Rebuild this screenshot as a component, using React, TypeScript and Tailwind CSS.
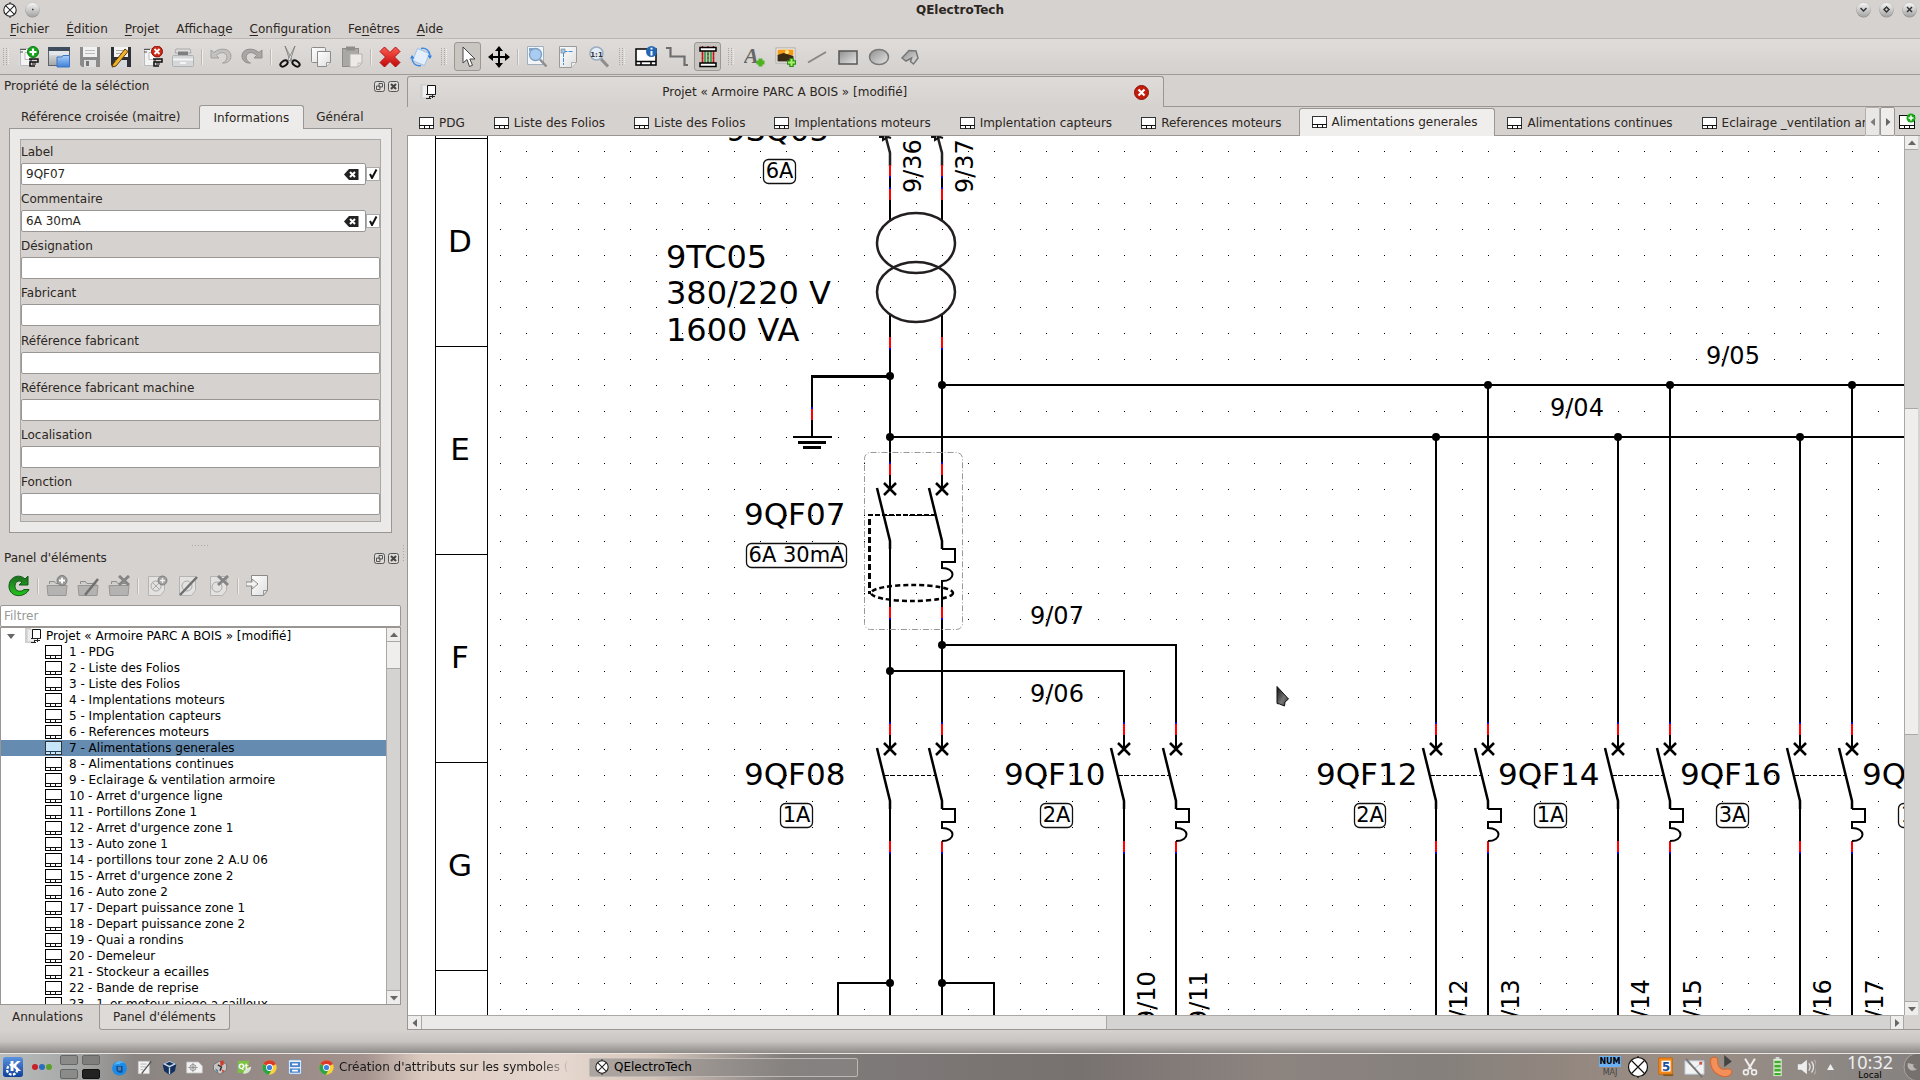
import { useState, type ReactNode } from "react";

const FOLIOS = [
  "PDG",
  "Liste des Folios",
  "Liste des Folios",
  "Implentations moteurs",
  "Implentation capteurs",
  "References moteurs",
  "Alimentations generales",
  "Alimentations continues",
  "Eclairage & ventilation armoire",
  "Arret d'urgence ligne",
  "Portillons Zone 1",
  "Arret d'urgence zone 1",
  "Auto zone 1",
  "portillons tour zone 2 A.U 06",
  "Arret d'urgence zone 2",
  "Auto zone 2",
  "Depart puissance zone 1",
  "Depart puissance zone 2",
  "Quai a rondins",
  "Demeleur",
  "Stockeur a ecailles",
  "Bande de reprise",
  "1_er moteur piege a cailloux",
];

const MENUS = [
  ["", "F", "ichier"],
  ["", "É", "dition"],
  ["", "P", "rojet"],
  ["Afficha", "g", "e"],
  ["", "C", "onfiguration"],
  ["Fe", "n", "êtres"],
  ["", "A", "ide"],
];

const FIELDS = [
  { id: "label", nom: "Label", valeur: "9QF07", coche: true },
  { id: "commentaire", nom: "Commentaire", valeur: "6A 30mA", coche: true },
  { id: "designation", nom: "Désignation", valeur: "", coche: false },
  { id: "fabricant", nom: "Fabricant", valeur: "", coche: false },
  { id: "ref-fabricant", nom: "Référence fabricant", valeur: "", coche: false },
  { id: "ref-machine", nom: "Référence fabricant machine", valeur: "", coche: false },
  { id: "localisation", nom: "Localisation", valeur: "", coche: false },
  { id: "fonction", nom: "Fonction", valeur: "", coche: false },
];

/* ---------- Icons ---------- */

function Svg({ children, size = 22 }: { children: ReactNode; size?: number }) {
  return (
    <svg width={size} height={size} viewBox="0 0 22 22" className="shrink-0" aria-hidden="true">
      {children}
    </svg>
  );
}

function Gradients() {
  return (
    <svg width="0" height="0" className="absolute" aria-hidden="true">
      <defs>
        <linearGradient id="gris" x1="0" y1="0" x2="0" y2="1"><stop offset="0" stopColor="#f7f7f7" /><stop offset="1" stopColor="#a5a5a5" /></linearGradient>
        <linearGradient id="forme" x1="0" y1="0" x2="1" y2="1"><stop offset="0" stopColor="#8f8f8f" /><stop offset="1" stopColor="#e6e6e6" /></linearGradient>
        <linearGradient id="bleu" x1="0" y1="0" x2="0" y2="1"><stop offset="0" stopColor="#a9d0fb" /><stop offset="1" stopColor="#3f7fd6" /></linearGradient>
        <linearGradient id="kde" x1="0" y1="0" x2="0" y2="1"><stop offset="0" stopColor="#5a93e0" /><stop offset="1" stopColor="#0d3f9c" /></linearGradient>
        <linearGradient id="rouge" x1="0" y1="0" x2="0" y2="1"><stop offset="0" stopColor="#ff5b50" /><stop offset="1" stopColor="#c00808" /></linearGradient>
        <linearGradient id="papier" x1="0" y1="0" x2="1" y2="1"><stop offset="0" stopColor="#ffffff" /><stop offset="1" stopColor="#dedede" /></linearGradient>
        <linearGradient id="vert" x1="0" y1="0" x2="0" y2="1"><stop offset="0" stopColor="#1f6b22" /><stop offset="1" stopColor="#22c41c" /></linearGradient>
        <linearGradient id="fleche" x1="0" y1="0" x2="1" y2="1"><stop offset="0" stopColor="#111" /><stop offset="0.6" stopColor="#777" /><stop offset="1" stopColor="#222" /></linearGradient>
      </defs>
    </svg>
  );
}

function FolioIcon({ large, actif }: { large?: boolean; actif?: boolean }) {
  const w = large ? 17 : 15;
  const h = large ? 14 : 12;
  return (
    <svg width={w} height={h} className="shrink-0" aria-hidden="true">
      <rect x="0.5" y="0.5" width={w - 1} height={h - 1} fill={actif ? "#c8e6f9" : "#fff"} stroke={large && !actif ? "#000" : "#333"} />
      <path d={`M0 ${h - 3.5}H${w} M5.5 ${h - 3}v3 M10.5 ${h - 3}v3`} stroke={actif ? "#244056" : "#111"} fill="none" />
    </svg>
  );
}

function ProjectIcon() {
  return (
    <svg width="16" height="16" className="shrink-0" aria-hidden="true">
      <path d="M0 0h6v15H0z" fill="#cfcfcf" />
      <path d="M2.5 1.5h7v12h-7z" fill="#eee" stroke="#d8d8d8" />
      <path d="M7.5 1.5h8v9h-8z" fill="#fff" stroke="#111" />
      <path d="M6 10.5h9M9 12.5h6M6 14.5h5M12.5 11v3M9.5 12v3" stroke="#222" fill="none" />
    </svg>
  );
}

function LampIcon({ size = 16 }: { size?: number }) {
  return (
    <Svg size={size}>
      <circle cx="11" cy="11" r="8.5" fill="#fff" stroke="#222" strokeWidth="1.5" />
      <path d="M5 5l12 12M17 5L5 17M11 0v2.5M11 19.5V22" stroke="#222" strokeWidth="1.4" />
    </Svg>
  );
}

function Pages() {
  return (
    <>
      <path d="M1 2h8v18H1z" fill="#d9d9d9" />
      <path d="M3.5 2.5h9v17h-9z" fill="#f4f4f4" stroke="#bbb" />
      <path d="M3 3.500h6M3 6h3" stroke="#555" />
      <path d="M8 6.500h10v7H8z" fill="#fff" stroke="#bbb" />
      <path d="M12 13h9v3h-8v4h5" fill="none" stroke="#111" strokeWidth="1.5" />
      <path d="M14 13v3M18 16v3M16 16v3" stroke="#111" />
    </>
  );
}

function Folder() {
  return (
    <>
      <path d="M3.5 9V6.500h5l1.500 2h9V10" fill="#cfcdcb" stroke="#8e8e8e" />
      <path d="M1 10.500h20l-1 10H2z" fill="#b4b3b1" stroke="#979695" />
    </>
  );
}

const TOOL_ICONS: Record<string, ReactNode> = {
  nouveau: (<><Pages /><circle cx="16" cy="6" r="5.5" fill="#15a51c" stroke="#0b7a12" /><path d="M16 2.500v7M12.500 6h7" stroke="#fff" strokeWidth="2.2" /></>),
  ouvrir: (<><rect x="0.5" y="1.5" width="21" height="18" fill="url(#gris)" stroke="#59646f" /><path d="M0 1h22v4H0z" fill="#3f4d5e" /><path d="M2 6h18v3H2z" fill="#dfe6ee" /><path d="M9 11h5l1-1.500h6.500V21H9z" fill="url(#bleu)" stroke="#3c74c4" /></>),
  enregistrer: (<><path d="M1 1h20v20H3l-2-2z" fill="#8b8b8b" /><rect x="4" y="1" width="14" height="10" fill="#f1f1f1" /><path d="M6 4.500h10M6 7.500h10" stroke="#bbb" /><rect x="5" y="14" width="12" height="7" fill="#dedede" /><rect x="7" y="15" width="3" height="5" fill="#777" /></>),
  sous: (<><path d="M1 1h20v20H3l-2-2z" fill="#2d3136" /><rect x="4" y="1" width="14" height="10" fill="#f4f4f4" /><path d="M6 4.500h10M6 7.500h10" stroke="#aaa" /><rect x="5" y="14" width="12" height="7" fill="#d5d8dc" /><path d="M3 18L15 3l3 2.500L6 20l-4 1z" fill="#f2b22a" stroke="#5b3c06" /></>),
  fermer: (<><Pages /><circle cx="16" cy="5.5" r="5.5" fill="#cc2a18" stroke="#8f1208" /><path d="M13.500 3l5 5M18.500 3l-5 5" stroke="#fff" strokeWidth="1.8" /></>),
  imprimer: (<><path d="M4 3h14l1 4H3z" fill="#ddd" stroke="#aaa" /><path d="M6 5.500h10v4H6z" fill="#7e7e7e" /><rect x="0.5" y="9.5" width="21" height="11" rx="1" fill="#d4d6d8" stroke="#aeb2b5" /><path d="M1 13.500h20M8 17h6" stroke="#f4f4f4" strokeWidth="2" /></>),
  annuler: <path d="M1 4v8h8L6.500 9.500C10 5 16.500 6 17 11c0 3-2 5-4.500 6 5 .5 8.500-2.500 8.500-7C21 3 11 .5 4 6.500z" fill="#c4c2c0" stroke="#a3a19f" />,
  retablir: <path d="M21 4v8h-8l2.500-2.500C12 5 5.500 6 5 11c0 3 2 5 4.500 6C4.500 17.500 1 14.500 1 10 1 3 11 .5 18 6.500z" fill="#a9a7a5" stroke="#918f8d" />,
  couper: (<><path d="M6 0l7 14-2 1z" fill="#ddd" stroke="#777" strokeWidth="0.8" /><path d="M16 0L9 14l2 1z" fill="#f4f4f4" stroke="#777" strokeWidth="0.8" /><ellipse cx="5" cy="17.5" rx="4" ry="2.5" transform="rotate(-35 5 17.5)" fill="none" stroke="#111" strokeWidth="2" /><ellipse cx="17" cy="17.5" rx="4" ry="2.5" transform="rotate(35 17 17.5)" fill="none" stroke="#111" strokeWidth="2" /></>),
  copier: (<><rect x="1.5" y="1.5" width="14" height="15" rx="1" fill="url(#papier)" stroke="#8b8b8b" /><path d="M7.500 5.500h13v11l-4 4h-9z" fill="url(#papier)" stroke="#8b8b8b" /><path d="M16.500 20.500v-4h4" fill="#eee" stroke="#999" /></>),
  coller: (<><rect x="1.5" y="2.5" width="16" height="18" fill="#aaa8a5" stroke="#8e8c8a" /><rect x="5" y="0.5" width="9" height="4" fill="#8f8d8b" /><path d="M9 8h12v9l-4 4H9z" fill="#ece9e7" stroke="#b5b3b0" /><path d="M17 21v-4h4" fill="none" stroke="#bbb" /></>),
  supprimer: <path d="M5.500 1L11 6.500 16.500 1 21 5.500 15.500 11l5.500 5.500-4.500 4.500L11 15.500 5.500 21 1 16.500 6.500 11 1 5.500z" fill="url(#rouge)" stroke="#b01212" />,
  pivoter: (<><path d="M7.500 2.500l12 5-5 12-12-5z" fill="#e4effb" stroke="#9cc0ea" /><path d="M11 2.500c5-1 8.500 2 9 7M11 19.500c-5 1-8.500-2-9-7" fill="none" stroke="#3d8be6" strokeWidth="1.5" /><path d="M17.500 9.500H22l-2 3.500zM0 12.500h4.500L2 9z" fill="#2f80e0" /></>),
  selection: <path d="M6 1v16l4-3.500 2.500 7 3-1.200-2.700-6.300H18z" fill="#fff" stroke="#444" />,
  deplacer: <path d="M11 0l4 5h-3v5h5V7l5 4-5 4v-3h-5v5h3l-4 5-4-5h3v-5H5v3l-5-4 5-4v3h5V5H7z" fill="#000" />,
  ajuster: (<><path d="M1.500.5h16v18h-16z" fill="#f2f6fa" stroke="#9fb0c2" /><path d="M3 2h4v3H3z" fill="#7fa6cf" /><circle cx="9.5" cy="8.5" r="6" fill="#a9cdf2" stroke="#7f9dbd" strokeWidth="1.3" /><path d="M14 13.500l6.500 7" stroke="#8d8d8d" strokeWidth="2.5" /></>),
  page: (<><path d="M2.500.5h17v16l-5 5h-12z" fill="url(#papier)" stroke="#9a9a9a" /><path d="M14.500 21.500v-5h5" fill="#eee" stroke="#aaa" /><path d="M6.500 5.500h10M6.500 7v12" stroke="#3c8fdc" strokeDasharray="4 1" /><rect x="4" y="3" width="4" height="4" fill="#a9c5dd" stroke="#789" strokeWidth="0.7" /></>),
  unUn: (<><path d="M13 13l7 7.500" stroke="#8d8d8d" strokeWidth="3" /><circle cx="8.5" cy="7.5" r="6.5" fill="#e3edf8" stroke="#9badc1" strokeWidth="1.5" /><text x="8.5" y="10.5" textAnchor="middle" className="text-[7px] font-bold" fill="#333">1:1</text></>),
  infos: (<><rect x="1" y="3" width="20" height="16" fill="#fff" stroke="#000" strokeWidth="1.5" /><path d="M1 15.500h20M6 16v3M16 16v3" stroke="#000" strokeWidth="1.5" /><circle cx="16.5" cy="5.5" r="5.5" fill="#2467b3" /><path d="M16.500 1.800v1.800M16.500 5v4.500" stroke="#fff" strokeWidth="2" /></>),
  conducteur: <path d="M0 2h4.500v8.500h14V19H22" fill="none" stroke="#6e6e6e" strokeWidth="2.2" />,
  echelle: (<><path d="M5.500-1v24M16.500-1v24M11-1v24" stroke="#e00000" strokeDasharray="2 2" strokeWidth="1.3" /><path d="M5.500 5v12M16.500 5v12" stroke="#d01010" strokeWidth="1.5" /><path d="M8 5v12M11 5v12M14 5v12" stroke="#168c2c" strokeWidth="1.3" /><path d="M3 1.500h16v3.500H3zM3 17h16v3.500H3z" fill="#fff" stroke="#000" strokeWidth="1.5" /></>),
  texte: (<><text x="0" y="17" className="font-['Liberation_Serif'] text-[22px] font-bold italic" fill="#666">A</text><path d="M16.500 12.500v8M12.500 16.500h8" stroke="#4db31f" strokeWidth="4" /></>),
  image: (<><rect x="1" y="2" width="19" height="15" fill="#fff" stroke="#aaa" /><path d="M2.500 3.500h16v6h-16z" fill="#f29a1c" /><path d="M2.500 9l6-2 10 3v5.500h-16z" fill="#3b2a14" /><circle cx="12" cy="6" r="2" fill="#ffe889" /><path d="M16.500 12v9M12 16.500h9" stroke="#2c8c10" strokeWidth="4.5" /><path d="M16.500 13v7M13 16.500h7" stroke="#a4f26a" strokeWidth="2" /></>),
  ligne: <path d="M2 16.500L20 6" stroke="#888" strokeWidth="2" />,
  rectangle: <rect x="2" y="5" width="18" height="13" fill="url(#forme)" stroke="#555" strokeWidth="1.5" />,
  ellipse: <ellipse cx="11" cy="11" rx="9.5" ry="7.5" fill="url(#forme)" stroke="#777" strokeWidth="1.5" />,
  polygone: <path d="M3 12L10 4.500 17 5l2 7-4.500 6-3-2.500 1-3.500L7 15z" fill="url(#forme)" stroke="#777" strokeWidth="1.5" />,
  recharger: <path d="M20 1v9h-9l3-3C10 4.500 7 7 7 11.500c0 5 6 6 9 3h5C17 23 2 23 1 12 .5 2 11-2 17 4z" fill="url(#vert)" stroke="#0e5c13" />,
  dossierPlus: (<><Folder /><circle cx="16" cy="5.5" r="5" fill="#9a9a9a" stroke="#7d7d7d" /><path d="M16 2.500v6M13 5.500h6" stroke="#fff" strokeWidth="1.8" /></>),
  dossierEdit: (<><Folder /><path d="M8 20L21 4" stroke="#707070" strokeWidth="2.5" /></>),
  dossierX: (<><Folder /><path d="M11 1l10 9M21 1l-10 9" stroke="#858585" strokeWidth="3" /></>),
  elementPlus: (<><path d="M2.500 1.500h16v14l-4 5h-12z" fill="#e3e2e1" stroke="#b5b4b3" /><circle cx="10" cy="11" r="5" fill="none" stroke="#aaa" /><path d="M6.500 7.500l7 7M13.500 7.500l-7 7" stroke="#aaa" /><circle cx="16.5" cy="5.5" r="4.5" fill="#a0a0a0" stroke="#808080" /><path d="M16.500 3v5M14 5.500h5" stroke="#eee" strokeWidth="1.5" /></>),
  elementEdit: (<><path d="M2.500 1.500h16v14l-4 5h-12z" fill="#e3e2e1" stroke="#b5b4b3" /><circle cx="10" cy="11" r="5" fill="none" stroke="#aaa" /><path d="M3 20L20 2" stroke="#707070" strokeWidth="2.5" /></>),
  elementX: (<><path d="M2.500 1.500h16v14l-4 5h-12z" fill="#e3e2e1" stroke="#b5b4b3" /><circle cx="9" cy="12" r="5" fill="none" stroke="#aaa" /><path d="M10 1l10 9M20 1l-10 9" stroke="#858585" strokeWidth="3" /></>),
  importer: (<><path d="M5.500.5h16v15l-4 5h-12z" fill="url(#papier)" stroke="#8a8a8a" /><path d="M17.500 20.500v-5h4" fill="none" stroke="#999" /><path d="M0 7h6V4l6 5-6 5v-3H0z" fill="#f2f2f2" stroke="#8a8a8a" /></>),
};

function ToolButton({ nom, icone, actif }: { nom: string; icone: string; actif?: boolean }) {
  return (
    <button
      type="button"
      aria-label={nom}
      className={`flex h-[29px] w-[31px] shrink-0 items-center justify-center ${actif ? "px-[2px]" : ""}`}
    >
      <span className={`flex h-[29px] w-7 items-center justify-center rounded-[3px] border ${actif ? "border-[#9b9793] bg-[#c9c6c2]" : "border-transparent"}`}>
        <Svg>{TOOL_ICONS[icone]}</Svg>
      </span>
    </button>
  );
}

function Separator() {
  return <div className="mx-[3px] h-4 w-px shrink-0 bg-[#bcb8b4] shadow-[1px_0_0_#efedec]" />;
}

function Handle({ first }: { first?: boolean }) {
  return (
    <div className={`flex shrink-0 items-center justify-center ${first ? "w-3" : "w-4"}`}>
      <svg width="6" height="17" aria-hidden="true">
        <path d="M0.500 0v17M3.500 0v17" stroke="#aaa6a2" strokeDasharray="1 1" />
        <path d="M5.500 1v16" stroke="#f2f0ef" strokeDasharray="1 1" />
      </svg>
    </div>
  );
}

function DockTitle({ titre }: { titre: string }) {
  return (
    <div className="flex h-5 items-center justify-between pr-[2px] pl-1">
      <h2>{titre}</h2>
      <div className="flex gap-[3px]">
        <button type="button" aria-label="Détacher">
          <svg width="11" height="11" aria-hidden="true"><rect x="0.5" y="0.5" width="10" height="10" rx="2" fill="#dedbd8" stroke="#555" /><path d="M5 2.500h3.500V6H5zM2.500 5H6v3.500H2.500z" fill="none" stroke="#555" /></svg>
        </button>
        <button type="button" aria-label="Fermer">
          <svg width="11" height="11" aria-hidden="true"><rect x="0.5" y="0.5" width="10" height="10" rx="2" fill="#dedbd8" stroke="#555" /><path d="M3 3l5 5M8 3L3 8" stroke="#444" strokeWidth="2" /></svg>
        </button>
      </div>
    </div>
  );
}

function Arrow({ d }: { d: string }) {
  return (
    <svg width="8" height="8" aria-hidden="true"><path d={d} fill="#666" /></svg>
  );
}

const UP = "M0 6L4 1.500 8 6z";
const DOWN = "M0 2L4 6.500 8 2z";
const LEFT = "M6 0L1.500 4 6 8z";
const RIGHT = "M2 0L6.500 4 2 8z";

/* ---------- Panels on the left ---------- */

function PropertiesDock() {
  return (
    <section className="flex flex-col">
      <DockTitle titre="Propriété de la séléction" />
      <div role="tablist" className="mt-2 ml-[9px] flex h-6 items-end">
        <button role="tab" type="button" aria-selected="false" className="h-[22px] pr-[18px] pl-3">Référence croisée (maitre)</button>
        <button role="tab" type="button" aria-selected="true" className="relative z-10 -mb-px h-6 rounded-t-[3px] border border-b-0 border-[#999693] bg-[#edecea] px-[14px]">Informations</button>
        <button role="tab" type="button" aria-selected="false" className="h-[22px] px-3">Général</button>
      </div>
      <div className="mx-[9px] border border-[#999693] bg-[#ebeae8] p-[10px]">
        <div className="flex h-[383px] flex-col justify-between border border-[#aaa7a5] bg-[#d6d2cf] pt-[3px] pb-[6px]">
          {FIELDS.map((f) => (
            <div key={f.id}>
              <label htmlFor={f.id} className="block h-5 leading-[18px]">{f.nom}</label>
              <div className="flex items-center">
                <div className="flex h-[22px] min-w-0 flex-1 items-center rounded-[2px] border border-[#999693] bg-white pr-[6px] pl-1">
                  <input id={f.id} defaultValue={f.valeur} className="min-w-0 flex-1 bg-transparent outline-none" />
                  {f.coche && (
                    <button type="button" aria-label="Effacer">
                      <svg width="15" height="11" aria-hidden="true"><path d="M5 0h9.500v11H5L0 5.500z" fill="#222" /><path d="M6 3l5 5M11 3L6 8" stroke="#fff" strokeWidth="2" /></svg>
                    </button>
                  )}
                </div>
                {f.coche && (
                  <label className="relative flex size-[14px] items-center justify-center border border-[#aaa] bg-white">
                    <input type="checkbox" defaultChecked aria-label={`Afficher ${f.nom}`} className="peer size-3 appearance-none" />
                    <svg width="9" height="10" className="pointer-events-none absolute hidden peer-checked:block" aria-hidden="true"><path d="M1 5l2 4L7.500 0.500" fill="none" stroke="#111" strokeWidth="2" /></svg>
                  </label>
                )}
              </div>
            </div>
          ))}
        </div>
      </div>
    </section>
  );
}

function ElementsDock({ courant, choisir }: { courant: number; choisir: (n: number) => void }) {
  return (
    <section className="flex min-h-0 flex-1 flex-col">
      <DockTitle titre="Panel d'éléments" />
      <div className="flex h-9 items-center pl-[3px]">
        <ToolButton nom="Recharger" icone="recharger" />
        <Separator />
        <ToolButton nom="Nouvelle catégorie" icone="dossierPlus" />
        <ToolButton nom="Éditer la catégorie" icone="dossierEdit" />
        <ToolButton nom="Supprimer la catégorie" icone="dossierX" />
        <Separator />
        <ToolButton nom="Nouvel élément" icone="elementPlus" />
        <ToolButton nom="Éditer l'élément" icone="elementEdit" />
        <ToolButton nom="Supprimer l'élément" icone="elementX" />
        <Separator />
        <ToolButton nom="Importer un élément" icone="importer" />
      </div>
      <input aria-label="Filtrer" placeholder="Filtrer" className="mt-px h-[22px] shrink-0 rounded-[2px] border border-[#999693] bg-white px-[3px] outline-none placeholder:text-[#999]" />
      <div className="flex min-h-0 flex-1 border border-[#999693] bg-white text-black">
        <ul role="tree" className="min-w-0 flex-1 overflow-hidden">
          <li className="flex h-4 items-center pl-[6px] leading-4">
            <Arrow d="M0 2h8L4 7z" />
            <span className="flex pr-[5px] pl-[10px]"><ProjectIcon /></span>
            Projet « Armoire PARC A BOIS » [modifié]
          </li>
          {FOLIOS.map((nom, i) => (
            <li key={i} className={i === courant ? "bg-[#658bb1]" : ""}>
              <button type="button" onClick={() => choisir(i)} className="flex h-4 w-full items-center gap-[7px] pl-11 leading-4 whitespace-nowrap">
                <FolioIcon large actif={i === courant} />
                {i + 1} - {nom}
              </button>
            </li>
          ))}
        </ul>
        <div className="flex w-[14px] flex-col border-l border-[#aaa7a5] bg-[#d5d3d1]">
          <button type="button" aria-label="Monter" className="flex h-[14px] items-center justify-center border-b border-[#aaa7a5] bg-[#eeedec]"><Arrow d={UP} /></button>
          <div className="h-[27px] border-b border-[#aaa7a5] bg-[#efeeed]" />
          <div className="flex-1" />
          <button type="button" aria-label="Descendre" className="flex h-[14px] items-center justify-center border-t border-[#aaa7a5] bg-[#eeedec]"><Arrow d={DOWN} /></button>
        </div>
      </div>
      <div role="tablist" className="flex h-[25px] shrink-0">
        <button role="tab" type="button" aria-selected="false" className="h-[23px] pr-[16px] pl-3">Annulations</button>
        <button role="tab" type="button" aria-selected="true" className="rounded-b-[3px] border border-t-0 border-[#999693] bg-[#dddad7] px-[13px]">Panel d'éléments</button>
      </div>
    </section>
  );
}

/* ---------- Schematic ---------- */

function Node({ x, y }: { x: number; y: number }) {
  return <circle cx={x} cy={y} r="4" />;
}

// Terminal of an element: red leg with a blue tip on the conductor side
function Terminal({ x, y, haut }: { x: number; y: number; haut?: boolean }) {
  return (
    <g fill="none" strokeWidth="2">
      <path d={`M${x} ${y}v11`} stroke="#ff0000" />
      <path d={haut ? `M${x} ${y - 2}v2` : `M${x} ${y + 11}v2`} stroke="#0000ff" />
    </g>
  );
}

function Breaker({ x, y, tore }: { x: number; y: number; tore?: boolean }) {
  const bas = tore ? y + 118 : y + 92;
  return (
    <g fill="none" stroke="#000" strokeWidth="2">
      {[x, x + 52].map((p) => (
        <g key={p}>
          <path d={`M${p} ${y - 14}V${y}`} />
          <path d={`M${p - 6} ${y - 6}l12 12M${p + 6} ${y - 6}l-12 12`} strokeWidth="2.5" />
          <path d={`M${p - 13} ${y - 1}L${p} ${y + 52}v8`} strokeWidth="2.5" />
          <Terminal x={p} y={y - 25} haut />
          <Terminal x={p} y={bas} />
        </g>
      ))}
      <path d={`M${x} ${y + 52}V${bas}`} />
      <path d={`M${x + 52} ${y + 60}h13v13h-13v6c14 0 14 13 0 13V${bas}`} />
      <path d={`M${x - 5} ${y + 26.5}h50`} strokeWidth="1" strokeDasharray="4 2" />
      {tore && (
        <>
          <path d={`M${x - 22} ${y + 26}h67`} strokeDasharray="5 2" />
          <path d={`M${x - 20.5} ${y + 30}v75`} strokeWidth="3" strokeDasharray="6 3" />
          <ellipse cx={x + 22} cy={y + 104} rx="41" ry="8" strokeWidth="2.5" strokeDasharray="5 3" />
        </>
      )}
    </g>
  );
}

function Rating({ x, y, w, texte }: { x: number; y: number; w: number; texte: string }) {
  return (
    <g>
      <rect x={x} y={y} width={w} height="24" rx="5" fill="none" stroke="#111" strokeWidth="1.3" />
      <text x={x + w / 2} y={y + 18} textAnchor="middle" className="text-[21px]">{texte}</text>
    </g>
  );
}

const BREAKERS = [
  { nom: "9QF07", x: 890, y: 489, tx: 744 },
  { nom: "9QF08", x: 890, y: 749, tx: 744 },
  { nom: "9QF10", x: 1124, y: 749, tx: 1004 },
  { nom: "9QF12", x: 1436, y: 749, tx: 1316 },
  { nom: "9QF14", x: 1618, y: 749, tx: 1498 },
  { nom: "9QF16", x: 1800, y: 749, tx: 1680 },
];

const RATINGS = [
  { x: 763.5, y: 159.5, w: 32, texte: "6A" },
  { x: 746.5, y: 543.5, w: 100, texte: "6A 30mA" },
  { x: 780.5, y: 803.5, w: 32, texte: "1A" },
  { x: 1040.5, y: 803.5, w: 32, texte: "2A" },
  { x: 1354.5, y: 803.5, w: 31, texte: "2A" },
  { x: 1534.5, y: 803.5, w: 32, texte: "1A" },
  { x: 1716.5, y: 803.5, w: 32, texte: "3A" },
  { x: 1898.5, y: 803.5, w: 32, texte: "1A" },
];

const WIRE_LABELS = [
  { x: 1706, y: 364, n: "9/05" },
  { x: 1550, y: 416, n: "9/04" },
  { x: 1030, y: 624, n: "9/07" },
  { x: 1030, y: 702, n: "9/06" },
];

const VERTICAL_LABELS = [
  { x: 921, y: 193, n: "9/36" },
  { x: 973, y: 193, n: "9/37" },
  { x: 1155, y: 1025, n: "9/10" },
  { x: 1207, y: 1025, n: "9/11" },
  { x: 1467, y: 1033, n: "9/12" },
  { x: 1519, y: 1033, n: "9/13" },
  { x: 1649, y: 1033, n: "9/14" },
  { x: 1701, y: 1033, n: "9/15" },
  { x: 1831, y: 1033, n: "9/16" },
  { x: 1883, y: 1033, n: "9/17" },
];

const WIRES = [
  "M890 189V220M942 189V220M890 315V462M942 315V462",
  "M942 385H1930M890 437H1930",
  "M890 618V724M942 618V724",
  "M942 645H1176V724M890 671H1124V724",
  "M890 854V1040M942 854V1040M1124 854V1040M1176 854V1040",
  "M890 983H838V1040M942 983H994V1040",
  "M1436 437V724M1618 437V724M1800 437V724",
  "M1488 385V724M1670 385V724M1852 385V724",
  "M1436 854V1040M1488 854V1040M1618 854V1040M1670 854V1040M1800 854V1040M1852 854V1040",
];

function Schematic() {
  return (
    <svg className="size-full" role="img" aria-label="Schéma du folio Alimentations generales">
      <defs>
        <pattern id="grille" x="500" y="151" width="26" height="26" patternUnits="userSpaceOnUse">
          <rect width="1" height="1" fill="#000" />
        </pattern>
      </defs>
      {/* scroll position of the folio */}
      <g transform="translate(-408 -136)">
        <rect x="490" y="140" width="1420" height="900" fill="url(#grille)" />
        <path d="M435.500 136V1040M487.500 136V1040M435 138.500h52M435 346.500h52M435 554.500h52M435 762.500h52M435 970.500h52" stroke="#000" fill="none" />
        <g className="text-[31px]" textAnchor="middle">
          <text x="460" y="252">D</text>
          <text x="460" y="460">E</text>
          <text x="460" y="668">F</text>
          <text x="460" y="876">G</text>
        </g>

        {WIRES.map((d) => <path key={d} d={d} fill="none" stroke="#000" strokeWidth="2" />)}

        {/* breaker 9SQ05, cut by the top of the view */}
        {[890, 942].map((x) => (
          <g key={x} fill="none" stroke="#222" strokeWidth="2">
            <path d={`M${x - 5} 134L${x} 153V166`} strokeWidth="2.5" />
            <path d={`M${x - 11} 137h4v3l5-3 3 1`} stroke="#111" />
            <Terminal x={x} y={165} />
            <path d={`M${x} 178v9`} stroke="#000" />
            <Terminal x={x} y={189} haut />
          </g>
        ))}

        {/* transformer */}
        <ellipse cx="916" cy="243" rx="39" ry="30" fill="none" stroke="#231f20" strokeWidth="2.5" />
        <ellipse cx="916" cy="292" rx="39" ry="30" fill="none" stroke="#231f20" strokeWidth="2.5" />
        <Terminal x={890} y={337} />
        <Terminal x={942} y={337} />

        {/* earth */}
        <path d="M890 376.500H811" stroke="#000" strokeWidth="3" />
        <path d="M812 375V438" stroke="#000" strokeWidth="2" />
        <Terminal x={812} y={409} haut />
        <path d="M793 437h39" stroke="#000" strokeWidth="2" />
        <path d="M798 442.500h28M803 447.500h18" stroke="#000" strokeWidth="3" />

        {BREAKERS.map((b) => (
          <g key={b.nom}>
            <Breaker x={b.x} y={b.y} tore={b.nom === "9QF07"} />
            <text x={b.tx} y={b.y + 36} className="text-[31px]">{b.nom}</text>
          </g>
        ))}
        <text x="1862" y="785" className="text-[31px]">9QF18</text>
        <text x="726" y="141" className="text-[31px]">9SQ05</text>
        <g className="text-[32px]">
          <text x="666" y="268">9TC05</text>
          <text x="666" y="304">380/220 V</text>
          <text x="666" y="341">1600 VA</text>
        </g>

        {RATINGS.map((r) => <Rating key={`${r.x}-${r.y}`} {...r} />)}
        {WIRE_LABELS.map((l) => <text key={l.n} x={l.x} y={l.y} className="text-[24px]">{l.n}</text>)}
        {VERTICAL_LABELS.map((l) => (
          <text key={l.n} transform={`translate(${l.x} ${l.y}) rotate(-90)`} className="text-[24px]">{l.n}</text>
        ))}

        <Node x={890} y={376} />
        <Node x={942} y={385} />
        <Node x={890} y={437} />
        <Node x={942} y={645} />
        <Node x={890} y={671} />
        <Node x={890} y={983} />
        <Node x={942} y={983} />
        {[1436, 1618, 1800].map((x) => <Node key={x} x={x} y={437} />)}
        {[1488, 1670, 1852].map((x) => <Node key={x} x={x} y={385} />)}

        <rect x="864.5" y="452.5" width="98" height="177" rx="6" fill="none" stroke="#999" strokeDasharray="6 2 1 2" />
        <path d="M1277 686.500v17l2.500 0.500 5 2 .5-4 3.500-3z" fill="url(#fleche)" stroke="#111" />
      </g>
    </svg>
  );
}

function Workspace({ courant, choisir }: { courant: number; choisir: (n: number) => void }) {
  return (
    <main className="flex min-w-0 flex-1 flex-col">
      <div className="flex h-[31px] shrink-0">
        <div className="flex w-1/2 items-center rounded-t-[3px] border-t border-r border-l border-[#999693] bg-gradient-to-b from-[#dedbd8] to-[#d6d2cf] pr-[14px] pl-3">
          <ProjectIcon />
          <span className="flex-1 text-center">Projet « Armoire PARC A BOIS » [modifié]</span>
          <button type="button" aria-label="Fermer le projet">
            <svg width="15" height="15" aria-hidden="true"><circle cx="7.5" cy="7.5" r="7" fill="#c41c0c" stroke="#8c1106" /><path d="M4.500 4.500l6 6M10.500 4.500l-6 6" stroke="#fff" strokeWidth="2.2" /></svg>
          </button>
        </div>
        <div className="flex-1 border-b border-[#999693]" />
      </div>
      <div className="flex h-[29px] shrink-0">
        <div role="tablist" className="flex min-w-0 flex-1 items-end overflow-hidden">
          {FOLIOS.slice(0, 9).map((nom, i) => (
            <button
              key={i}
              role="tab"
              type="button"
              aria-selected={i === courant}
              onClick={() => choisir(i)}
              className={`flex h-7 shrink-0 items-center gap-[5px] whitespace-nowrap pr-[17px] pl-3 ${i === courant ? "rounded-t-[3px] border border-b-0 border-[#999693] bg-[#efeeed] pb-px" : "border-b border-[#999693] pt-[2px]"}`}
            >
              <FolioIcon />
              {nom.replace("& ", "_")}
            </button>
          ))}
        </div>
        <button type="button" aria-label="Onglets précédents" className="flex w-[15px] items-center justify-center rounded-[2px] border border-[#aaa7a5] bg-[#eeedec] opacity-80"><Arrow d={LEFT} /></button>
        <button type="button" aria-label="Onglets suivants" className="flex w-[15px] items-center justify-center rounded-[2px] border border-[#999693] bg-[#eeedec]"><Arrow d={RIGHT} /></button>
        <button type="button" aria-label="Ajouter un folio" className="flex w-[25px] items-center justify-center border-b border-[#999693]">
          <svg width="17" height="17" aria-hidden="true"><rect x="0.5" y="2.5" width="15" height="13" fill="#fff" stroke="#111" /><path d="M0 12.500h16M5.500 13v3M10.500 13v3" stroke="#111" /><circle cx="12" cy="5" r="4.5" fill="#18a818" /><path d="M12 2.500v5M9.500 5h5" stroke="#fff" strokeWidth="1.5" /></svg>
        </button>
      </div>
      <div className="flex min-h-0 flex-1 flex-col border-b border-l border-[#999693]">
        <div className="flex min-h-0 flex-1">
          <div className="min-w-0 flex-1 overflow-hidden bg-white"><Schematic /></div>
          <div className="mr-[2px] flex w-[14px] shrink-0 flex-col border-l border-[#aaa7a5] bg-[#d5d3d1]">
            <button type="button" aria-label="Monter" className="flex h-[14px] items-center justify-center border-b border-[#aaa7a5] bg-[#eeedec]"><Arrow d={UP} /></button>
            <div className="flex-[259]" />
            <div className="flex-[326] border-y border-[#aaa7a5] bg-[#efeeed]" />
            <div className="flex-[267]" />
            <button type="button" aria-label="Descendre" className="flex h-[14px] items-center justify-center border-t border-[#aaa7a5] bg-[#eeedec]"><Arrow d={DOWN} /></button>
          </div>
        </div>
        <div className="mr-4 flex h-[14px] shrink-0 border-t border-[#aaa7a5] bg-[#d5d3d1]">
          <button type="button" aria-label="Défiler à gauche" className="flex w-[14px] items-center justify-center border-r border-[#aaa7a5] bg-[#eeedec]"><Arrow d={LEFT} /></button>
          <div className="flex-[684] border-r border-[#aaa7a5] bg-[#ebeae9]" />
          <div className="flex-[784]" />
          <button type="button" aria-label="Défiler à droite" className="flex w-[14px] items-center justify-center border-x border-[#aaa7a5] bg-[#eeedec]"><Arrow d={RIGHT} /></button>
        </div>
      </div>
    </main>
  );
}

/* ---------- Taskbar ---------- */

function Chrome() {
  return (
    <Svg size={15}>
      <circle cx="11" cy="11" r="10.5" fill="#fbd13a" />
      <path d="M11 11L2 5.500A10.500 10.500 0 0 1 20.500 6z" fill="#dc3b2b" />
      <path d="M11 11L1.800 5.800A10.500 10.500 0 0 0 10 21.500l4-7z" fill="#2ea44a" />
      <circle cx="11" cy="11" r="5" fill="#fff" />
      <circle cx="11" cy="11" r="3.8" fill="#3f80e0" />
    </Svg>
  );
}

const LAUNCHERS: [string, ReactNode][] = [
  ["Web", <Svg size={17}><circle cx="11" cy="12" r="9.5" fill="#1b8be8" /><path d="M4 9C5 3 13 0 18 6c-3-2-6-1-7 1-3-1-5 0-7 2z" fill="#55b6f7" /><path d="M7 9h8v8c-4 2-8 0-8-3z" fill="#0b4f9e" /><path d="M9 10h4v5H9z" fill="#5b7d9e" /></Svg>],
  ["Éditeur", <Svg size={15}><path d="M2 2h16v18H2z" fill="#f4f4f4" stroke="#ccc" /><path d="M5 6h9M5 10h8M5 14h4" stroke="#999" /><path d="M21 2L9 17l-2 3" stroke="#555" strokeWidth="2" fill="none" /></Svg>],
  ["VirtualBox", <Svg size={15}><path d="M11 1l10 5-2 10-8 6-8-6L1 6z" fill="#14305c" /><path d="M11 1l10 5-10 5L1 6z" fill="#c9d4e4" /><path d="M11 2.500l6 3-6 3-6-3z" fill="#14305c" /><path d="M11 11v10" stroke="#c9d4e4" strokeWidth="2" /></Svg>],
  ["Éditeur d'éléments", <Svg size={17}><path d="M1 4h15l5 5v9H1z" fill="#f2f2f2" stroke="#ccc" /><circle cx="9" cy="11" r="4" fill="none" stroke="#888" /><path d="M3 11h12M9 5v12M6 8l6 6M12 8l-6 6" stroke="#888" /></Svg>],
  ["Outils", <Svg size={16}><path d="M2 8l8-5 10 4v8l-9 6-9-6z" fill="#c9c4c2" stroke="#666" /><path d="M11 3l5-1v6l-4 2zM13 14l4 2-2 3z" fill="#d03a2a" /><path d="M4 13l4 2v4z" fill="#2f6f9c" /><path d="M8 8l5 3-2 5" stroke="#333" fill="none" strokeWidth="2" /></Svg>],
  ["Qt Creator", <Svg size={15}><path d="M1 1h17l-3 18H1z" fill="#7cc242" /><text x="2" y="13" className="text-[11px] font-bold" fill="#fff">Qt</text><path d="M9 20c1-6 6-9 12-10-1 6-4 11-12 10z" fill="#d9e6d0" /></Svg>],
  ["Chrome", <Chrome />],
  ["Fichiers", <Svg size={16}><rect x="2" y="1" width="18" height="20" rx="2" fill="#e9eef5" stroke="#6b87ad" /><path d="M4 4h14v7H4zM4 13h14v6H4z" fill="#4d86cd" /><path d="M7 7.500h8M7 16h8" stroke="#fff" strokeWidth="2.5" /></Svg>],
];

const TRAY: [string, ReactNode][] = [
  ["QElectroTech", <Svg size={22}><circle cx="11" cy="11" r="9.5" fill="#fff" stroke="#111" strokeWidth="1.2" /><path d="M4.500 4.500l13 13M17.500 4.500l-13 13M11 0v1.500M11 20.500V22" stroke="#111" strokeWidth="1.2" /></Svg>],
  ["Agenda", <Svg size={20}><path d="M3 1h15v18H3z" fill="#f08a1d" stroke="#c8640c" /><rect x="6" y="4" width="10" height="12" fill="#fff" /><text x="11" y="15" textAnchor="middle" className="text-[13px] font-bold" fill="#1c4f9c">5</text><path d="M8 20h11" stroke="#8a5a20" strokeWidth="2" /></Svg>],
  ["Courrier", <Svg size={21}><path d="M1 4h20v14H1z" fill="#f3f3f3" stroke="#b9c7d8" /><path d="M1 4l10 8 10-8" fill="none" stroke="#b8c6d8" /><path d="M2 2l17 19" stroke="#777" strokeWidth="2" /><rect x="16" y="5" width="3" height="3" fill="#cf5442" /></Svg>],
  ["Téléphone", <Svg size={24}><path d="M1 3c3-2 6-1 6 2 0 4 1 7 5 8 4 0 8-1 8 2 0 4-5 6-10 4C3 17-1 9 1 3z" fill="#f3905a" stroke="#d26a35" /><path d="M13 0l7 6-7 5z" fill="#444" /></Svg>],
  ["Presse-papiers", <Svg size={18}><path d="M5 1l8 13M17 1L9 14" stroke="#eee" strokeWidth="2.5" /><circle cx="6" cy="17.5" r="3" fill="none" stroke="#eee" strokeWidth="2" /><circle cx="16" cy="17.5" r="3" fill="none" stroke="#eee" strokeWidth="2" /></Svg>],
  ["Batterie", <Svg size={20}><rect x="6" y="2" width="9" height="19" fill="#e4f0dc" /><path d="M8.500 0h4v2h-4z" fill="#ddd" /><path d="M7 4h7v3H7zM7 8.500h7v3H7zM7 13h7v3H7zM7 17.500h7v2.500H7z" fill="#3fae2a" /></Svg>],
  ["Volume", <Svg size={20}><path d="M2 8h4l6-5v16l-6-5H2z" fill="#eee" /><path d="M14 7c2 2 2 6 0 8M17 5c3 3 3 9 0 12" fill="none" stroke="#e4e4e4" strokeWidth="1.5" /><path d="M20 3c3.500 4 3.500 12 0 16" fill="none" stroke="#aaa" strokeWidth="1.5" /></Svg>],
];

function Taskbar() {
  return (
    <footer className="flex h-[27px] shrink-0 items-center border-t border-[#e9e5e2] bg-[linear-gradient(90deg,#b9bebd_0%,#a5a7a6_4%,#8a8582_7%,#9a8c89_15%,#a3928d_19%,#dccbc0_22%,#e6d8d0_29%,#d6c6bb_34%,#807d7c_41%,#77716f_56%,#8d8480_66%,#85807c_75%,#93877f_82%,#9b8f86_88%,#858281_100%)] text-[#1a1a1a]">
      <button type="button" aria-label="Menu K" className="ml-[3px]">
        <Svg size={20}><rect width="22" height="22" rx="3" fill="url(#kde)" /><circle cx="10" cy="14" r="5.5" fill="none" stroke="#fff" strokeWidth="2.5" strokeDasharray="3 1.5" /><text x="7" y="15" className="text-[16px] font-bold" fill="#fff">K</text></Svg>
      </button>
      <svg width="21" height="8" className="ml-2" aria-hidden="true"><circle cx="4" cy="4" r="3" fill="#c8202a" /><circle cx="11" cy="4" r="3" fill="#2a6cc0" /><circle cx="18" cy="4" r="3" fill="#5da028" /></svg>
      <div className="ml-2 grid grid-cols-2 gap-1">
        <div className="h-[10px] w-[18px] rounded-[2px] border border-[#666] bg-[#8b8b8a]" />
        <div className="h-[10px] w-[18px] rounded-[2px] border border-[#666] bg-[#7f7e7d]" />
        <div className="h-[10px] w-[18px] rounded-[2px] border border-[#666] bg-[#8b8b8a]" />
        <div className="h-[10px] w-[18px] rounded-[2px] border border-[#111] bg-[#222]" />
      </div>
      <div className="ml-[7px] flex">
        {LAUNCHERS.map(([nom, icone]) => (
          <button key={nom} type="button" aria-label={nom} className="flex w-[25px] items-center justify-center">{icone}</button>
        ))}
      </div>
      <button type="button" className="ml-3 flex w-[270px] items-center gap-[5px] overflow-hidden whitespace-nowrap [mask-image:linear-gradient(90deg,#000_82%,transparent_93%)]">
        <Chrome />
        Création d'attributs sur les symboles (
      </button>
      <button type="button" className="flex h-[19px] w-[269px] items-center gap-1 rounded-[2px] border border-[#bdb8b4] bg-[#888584]/60 pl-1 text-black">
        <LampIcon />
        QElectroTech
      </button>
      <div className="flex-1" />
      <div className="flex w-5 flex-col items-center text-[8px] leading-[11px] font-bold">
        <span className="bg-[#6db1f2] text-black">NUM</span>
        <span className="font-normal text-[#444]">MAJ</span>
      </div>
      <div className="ml-1 flex">
        {TRAY.map(([nom, icone]) => (
          <button key={nom} type="button" aria-label={nom} className="flex w-7 items-center justify-center">{icone}</button>
        ))}
      </div>
      <button type="button" aria-label="Plus d'icônes" className="mr-3 ml-[7px]">
        <svg width="7" height="6" aria-hidden="true"><path d="M0 6L3.500 0 7 6z" fill="#eee" /></svg>
      </button>
      <div className="flex w-12 flex-col items-center">
        <time className="font-['Noto_Sans'] text-[18px] leading-[15px] text-[#eee]">10:32</time>
        <span className="text-[9px] leading-[10px] text-black">Local</span>
      </div>
      <button type="button" aria-label="Boîte à outils" className="ml-2">
        <svg width="18" height="26" aria-hidden="true"><circle cx="16" cy="13" r="14" fill="#77716d" stroke="#aaa39e" /><path d="M6 9c-2 6 4 10 9 6-3 0-4-3-4-5l3 1" fill="#b9b5b2" /></svg>
      </button>
    </footer>
  );
}

/* ---------- Window ---------- */

function WindowButton({ nom, d }: { nom: string; d: string }) {
  return (
    <button type="button" aria-label={nom}>
      <svg width="17" height="17" aria-hidden="true">
        <circle cx="8.5" cy="9.5" r="7" fill="#8f8b88" />
        <circle cx="8.5" cy="8.5" r="7" fill="url(#gris)" stroke="#b5b1ae" strokeWidth="0.5" />
        <path d={d} fill="none" stroke="#333" strokeWidth="1.5" />
      </svg>
    </button>
  );
}

export default function App() {
  const [courant, setCourant] = useState(6);

  return (
    <div className="flex h-screen flex-col overflow-hidden bg-[#d6d2cf] font-['DejaVu_Sans',sans-serif] text-[12px] leading-4 text-[#2b2622]">
      <Gradients />
      <header className="flex h-[19px] shrink-0 items-center px-[2px]">
        <div className="flex flex-1 items-center gap-[6px]">
          <LampIcon />
          <WindowButton nom="Épingler" d="M8 8.500h1.500" />
        </div>
        <h1 className="font-bold">QElectroTech</h1>
        <div className="flex flex-1 items-center justify-end gap-[6px]">
          <WindowButton nom="Réduire" d="M5.500 7l3 3 3-3" />
          <WindowButton nom="Agrandir" d="M8.500 6l2.500 2.500-2.500 2.500L6 8.500z" />
          <WindowButton nom="Fermer" d="M6 6l5 5M11 6l-5 5" />
        </div>
      </header>
      <nav className="flex h-5 shrink-0 items-center gap-[17px] border-b border-[#bab6b3] pl-[10px]">
        {MENUS.map(([avant, lettre, apres]) => (
          <button key={lettre} type="button">
            {avant}<span className="underline underline-offset-2">{lettre}</span>{apres}
          </button>
        ))}
      </nav>
      <div role="toolbar" className="flex h-9 shrink-0 items-center border-b border-[#9f9b98] bg-gradient-to-b from-[#dfdcd9] to-[#d4d0cd]">
        <Handle first />
        <ToolButton nom="Nouveau" icone="nouveau" />
        <ToolButton nom="Ouvrir" icone="ouvrir" />
        <ToolButton nom="Enregistrer" icone="enregistrer" />
        <ToolButton nom="Enregistrer sous" icone="sous" />
        <ToolButton nom="Fermer" icone="fermer" />
        <ToolButton nom="Imprimer" icone="imprimer" />
        <Separator />
        <ToolButton nom="Annuler" icone="annuler" />
        <ToolButton nom="Rétablir" icone="retablir" />
        <Separator />
        <ToolButton nom="Couper" icone="couper" />
        <ToolButton nom="Copier" icone="copier" />
        <ToolButton nom="Coller" icone="coller" />
        <Separator />
        <ToolButton nom="Supprimer" icone="supprimer" />
        <ToolButton nom="Pivoter" icone="pivoter" />
        <Handle />
        <ToolButton nom="Mode sélection" icone="selection" actif />
        <ToolButton nom="Mode visualisation" icone="deplacer" />
        <Separator />
        <ToolButton nom="Zoom adapté" icone="ajuster" />
        <ToolButton nom="Zoom page" icone="page" />
        <ToolButton nom="Zoom 100%" icone="unUn" />
        <Handle />
        <ToolButton nom="Propriétés du folio" icone="infos" />
        <ToolButton nom="Réinitialiser les conducteurs" icone="conducteur" />
        <ToolButton nom="Création automatique de conducteurs" icone="echelle" actif />
        <Handle />
        <ToolButton nom="Ajouter un texte" icone="texte" />
        <ToolButton nom="Ajouter une image" icone="image" />
        <ToolButton nom="Ligne" icone="ligne" />
        <ToolButton nom="Rectangle" icone="rectangle" />
        <ToolButton nom="Ellipse" icone="ellipse" />
        <ToolButton nom="Polygone" icone="polygone" />
      </div>
      <div className="flex min-h-0 flex-1 pt-px">
        <aside className="flex w-[401px] shrink-0 flex-col">
          <PropertiesDock />
          <div className="flex h-[15px] items-end justify-center pb-px">
            <svg width="17" height="2" aria-hidden="true"><path d="M0 0.500h17" stroke="#aaa6a2" strokeDasharray="1 2" /></svg>
          </div>
          <ElementsDock courant={courant} choisir={setCourant} />
        </aside>
        <div className="flex w-[6px] shrink-0 items-center justify-center">
          <svg width="2" height="17" aria-hidden="true"><path d="M0.500 0v17" stroke="#aaa6a2" strokeDasharray="1 2" /></svg>
        </div>
        <Workspace courant={courant} choisir={setCourant} />
      </div>
      <div className="h-[23px] shrink-0 bg-gradient-to-b from-[#d6d2cf] via-[#c8c4c1] to-[#8e8b88]" />
      <Taskbar />
    </div>
  );
}
